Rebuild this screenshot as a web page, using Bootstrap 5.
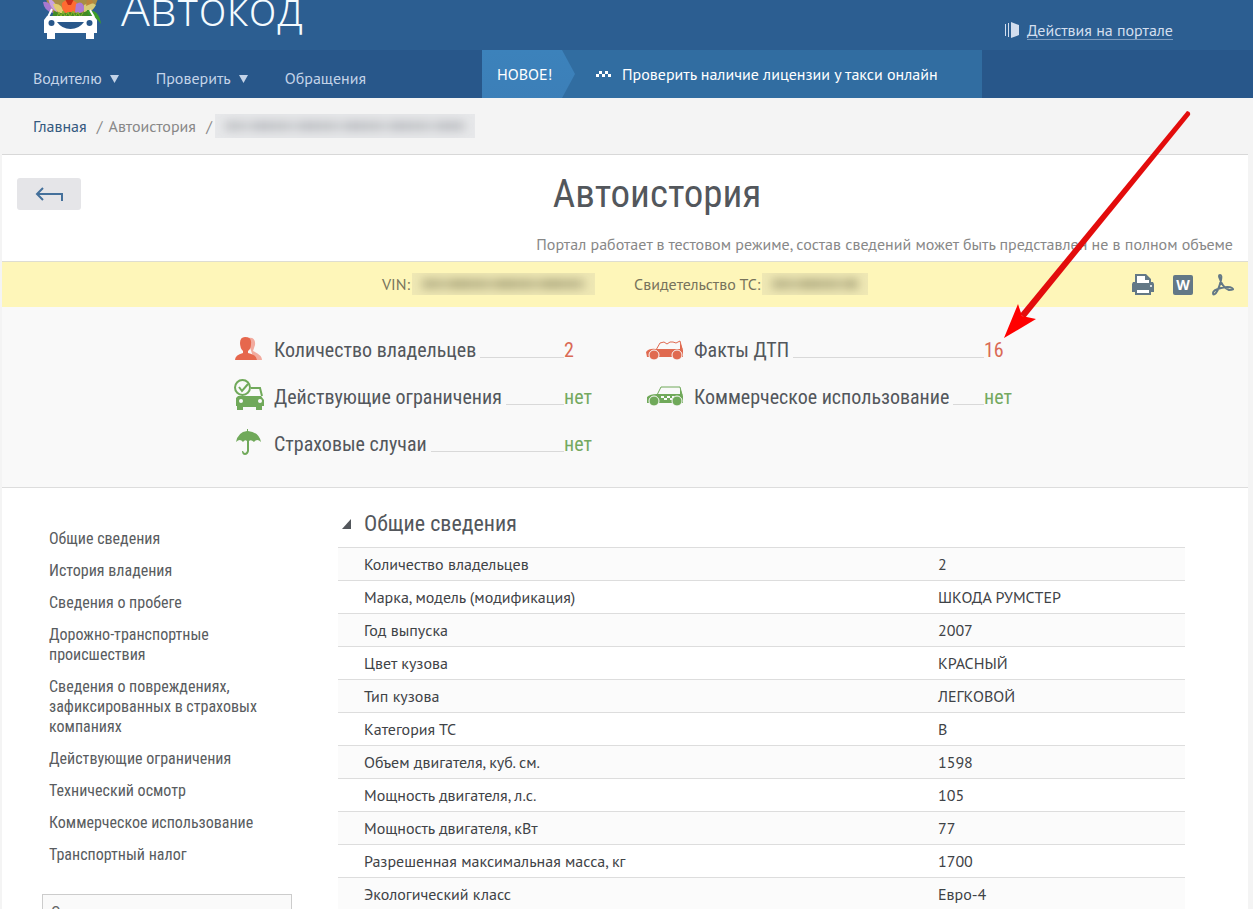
<!DOCTYPE html>
<html lang="ru">
<head>
<meta charset="utf-8">
<meta name="viewport" content="width=device-width, initial-scale=1">
<title>Автокод — Автоистория</title>
<link rel="stylesheet" href="https://cdn.jsdelivr.net/npm/bootstrap@5.3.0/dist/css/bootstrap.min.css">
<style>
  :root { --narrow: "Roboto Condensed", "Liberation Sans Narrow", "Liberation Sans", sans-serif; }
  body { background: #f4f4f4; color: #444; font: 16px/24px "PT Sans", "Noto Sans", sans-serif; overflow-x: hidden; }
  a { text-decoration: none; }
  svg { display: block; flex: none; }

  .top-bar { background: #2c5e91; height: 50px; padding: 0 80px 0 42px; }
  .logo-text { font: 300 48px/56px "Open Sans", Roboto, sans-serif; color: #f4fbff; margin: 0 0 14px 19px; }
  .portal-link { color: #d3deee; margin-top: 10px; }
  .portal-link span { border-bottom: 1px solid #7d9cc0; line-height: 18px; }
  .menu-bar { background: #28578a; min-height: 48px; }
  .menu-list { flex: 0 0 482px; padding: 8px 0 0 33px; gap: 37px; }
  .menu-list a { color: #c3d3e8; }
  .promo { flex: 0 1 500px; background: #316da1; color: #fff; }
  .promo:hover { color: #fff; }
  .promo-tag { background: linear-gradient(#3c82bb, #3c7fb8); width: 93px; padding-left: 15px; margin-right: 21px; clip-path: polygon(0 0, 80px 0, 100% 50%, 80px 100%, 0 100%); }
  .promo-text { margin-left: 11px; }

  .crumbs { padding: 0 33px; height: 56px; color: #888; gap: 6px; }
  .crumbs a { color: #34597f; }
  .crumbs .redacted { margin-left: -3px; }
  .redacted { display: inline-block; overflow: hidden; height: 24px; background: #e7e8ea; }
  .redacted i { display: block; height: 10px; margin: 7px 10px; background: repeating-linear-gradient(90deg, #c3c5c8 0 17px, #cdcfd2 17px 29px, #bfc1c5 29px 46px); filter: blur(5px); }
  .redacted.on-yellow { background: #efe8b4; height: 22px; }
  .redacted.on-yellow i { margin: 6px 10px; background: repeating-linear-gradient(90deg, #b9b48a 0 17px, #c4be93 17px 29px, #b3ae84 29px 46px); }

  .sheet { background: #fff; border-top: 1px solid #d8d8d8; margin: 0 5px 0 2px; }
  .title-row { padding: 9px 15px 0; }
  .back-btn { width: 64px; height: 32px; background: #e5e5e8; border-radius: 3px; margin-top: 14px; }
  .page-title { font: 400 39px/60px var(--narrow); color: #53575c; margin: 0 0 3px; }
  .notice { color: #888; line-height: 34px; }
  .vin-bar { background: #fef6b9; border-top: 1px solid #deddd2; height: 46px; color: #77735c; padding: 0 14px 2px 380px; }
  .certificate { margin-left: 39px; }
  .vin-bar .redacted { margin-left: 2px; }
  .export-tools { gap: 19px; padding-top: 2px; }
  .facts { background: #f9f9f9; border-bottom: 1px solid #ddd; padding: 19px 0 20px; gap: 50px; }
  .fact { height: 47px; font: 20px/28px var(--narrow); color: #53575c; }
  .fact-icon { width: 40px; }
  .fact-icon.wide { width: 48px; }
  .fact-name { width: 290px; gap: 4px; }
  .fact-name::after { content: ""; flex: 1; border-bottom: 1px solid #d9d9d9; margin-bottom: 6px; }
  .fact-value { width: 32px; }
  .bad { color: #d96a55; }
  .good { color: #74a95f; }
  .pointer { position: absolute; left: 20px; bottom: 24px; z-index: 2; }

  .details { padding: 20px 63px 0 40px; gap: 46px; }
  .side { flex: 0 0 250px; font: 16px/20px var(--narrow); }
  .side-list { padding: 21px 28px 0 7px; gap: 12px; }
  .side-list a { color: #595c60; }
  .side-box { border: 1px solid #ccc; background: #fafafa; margin-top: 29px; padding: 8px; color: #666; }
  .section-title { font: 22px/32px var(--narrow); color: #53575c; margin: 0; height: 39px; gap: 13px; padding-left: 3px; }
  .spec { color: #3f4347; width: 100%; }
  .spec th, .spec td { border-top: 1px solid #ddd; padding: 4px 24px; font-weight: 400; height: 33px; }
  .spec th { width: 68%; padding-left: 26px; }
  .spec tr:nth-child(odd) { background: #fbfbfb; }
</style>
</head>
<body>
<header>
  <div class="top-bar d-flex justify-content-between align-items-end overflow-hidden">
    <a href="#" class="d-flex align-items-end" aria-label="Автокод">
      <svg width="60" height="50" viewBox="0 0 60 50">
        <path d="M12 14Q5 6 4-2L56-2Q54 7 46 15Z" fill="#a98d45"/>
        <path d="M1 2Q9 0 11 13Q2 11 1 2Z" fill="#a779d0"/><path d="M6-2Q15 1 15 12Q8 9 6-2Z" fill="#c9a2e0"/>
        <path d="M11 4Q20 2 22 14Q13 13 11 4Z" fill="#e2cc70"/><path d="M20 3Q27-4 35 3Q36 13 28 14Q19 13 20 3Z" fill="#ff6b32"/>
        <path d="M22-3H33L29 5H26Z" fill="#c92c17"/><path d="M34 4Q41-1 43 10Q38 15 33 12Z" fill="#ad7bd4"/>
        <path d="M42 5Q49 1 54 5Q50 13 42 12Z" fill="#d8cb78"/><path d="M45 0Q50-3 51 3L44 6Z" fill="#bd843b"/>
        <path d="M45 10Q57 9 59 24Q53 15 44 15Z" fill="#3b9d28"/>
        <path d="M10 17L12 11Q20 15 28 12Q38 15 45 11L48 17Z" fill="#438b26"/>
        <path d="M15 17l2-5 2 5 2-6 2 6 3-5 2 5 3-6 2 6 3-5 2 5 3-4" stroke="#8bb52d" stroke-width="1" fill="none"/>
        <path d="M6 17L10 9M52 17L48 10" stroke="#fff" stroke-width="2"/>
        <path d="M5 16H52L55 20V33H52V39H44V33H13V39H5V33H2V20Z" fill="#fff"/>
        <circle cx="9.500" cy="23" r="3" fill="#28578a"/><circle cx="47.500" cy="23" r="3" fill="#28578a"/>
        <path d="M15 22H42Q37 29 28.500 29T15 22Z" fill="#28578a"/>
      </svg>
      <span class="logo-text">Автокод</span>
    </a>
    <a href="#" class="portal-link d-flex align-items-center gap-2 align-self-center">
      <svg width="14" height="16" viewBox="0 0 14 16" fill="#d3deee"><path d="M0 2h1v12H0zM3 1h1v14H3zM6 0l8 3v10l-8 3z"/></svg>
      <span>Действия на портале</span>
    </a>
  </div>
  <div class="menu-bar d-flex">
    <nav class="menu-list d-flex align-items-center">
      <a href="#" class="d-flex align-items-center gap-2">Водителю <svg width="9" height="10"><path d="M0 2H9L4.500 10Z" fill="#c3d3e8"/></svg></a>
      <a href="#" class="d-flex align-items-center gap-2">Проверить <svg width="9" height="10"><path d="M0 2H9L4.500 10Z" fill="#c3d3e8"/></svg></a>
      <a href="#">Обращения</a>
    </nav>
    <a href="#" class="promo d-flex align-items-center">
      <span class="promo-tag d-flex align-items-center align-self-stretch">НОВОЕ!</span>
      <svg width="15" height="6" fill="#fff"><path d="M0 3h3v3H0zM3 0h3v3H3zM6 3h3v3H6zM9 0h3v3H9zM12 3h3v3h-3z"/></svg>
      <span class="promo-text text-nowrap">Проверить наличие лицензии у такси онлайн</span>
    </a>
  </div>
</header>

<nav class="crumbs d-flex align-items-center" aria-label="Навигация">
  <a href="#">Главная</a><span>&nbsp;/</span><span>Автоистория</span><span>&nbsp;/</span>
  <span class="redacted" style="width:260px"><i></i></span>
</nav>

<main class="sheet">
  <div class="title-row">
    <div class="d-flex align-items-start">
      <button type="button" class="back-btn btn p-0 border-0 d-flex align-items-center justify-content-center" aria-label="Назад">
        <svg width="28" height="14" fill="none" stroke="#44709b" stroke-width="2"><path d="M8 1L2 7l6 6M2 7H27V14"/></svg>
      </button>
      <h1 class="page-title flex-grow-1 text-center">Автоистория</h1>
    </div>
    <div class="notice text-end">Портал работает в тестовом режиме, состав сведений может быть представлен не в полном объеме</div>
  </div>

  <div class="vin-bar d-flex align-items-center">
    <span>VIN:</span><span class="redacted on-yellow" style="width:183px"><i></i></span>
    <span class="certificate">Свидетельство ТС:</span><span class="redacted on-yellow" style="width:106px"><i></i></span>
    <div class="export-tools d-flex align-items-center ms-auto">
      <button type="button" class="btn p-0 border-0" aria-label="Печать"><svg width="22" height="22"><path d="M3 0H14L19 5V8H21L22 10V18H19V21H3V18H0V10L1 8H3Z" fill="#637886"/><path d="M5 2H13V6H17V9H5ZM5 16H17V19H5Z" fill="#fff"/><circle cx="19" cy="12" r="1" fill="#fff"/></svg></button>
      <button type="button" class="btn p-0 border-0" aria-label="Word"><svg width="20" height="20"><rect width="20" height="20" rx="2" fill="#637886"/><text x="10" y="15" text-anchor="middle" font-family="Open Sans, sans-serif" font-weight="700" font-size="14" fill="#fff">W</text></svg></button>
      <button type="button" class="btn p-0 border-0" aria-label="PDF"><svg width="22" height="22" fill="none" stroke="#637886" stroke-width="2"><path d="M8 5Q6 1 8 1T9 6Q7 15 4 19Q1 22 1 19T9 14Q17 12 20 14T17 16Q10 13 8 5Z"/></svg></button>
    </div>
  </div>

  <section class="facts d-flex justify-content-center">
    <div>
      <div class="fact d-flex align-items-center">
        <div class="fact-icon"><svg width="28" height="26"><path d="M13 1Q22-1 21 8L19 14Q28 18 28 23H20Z" fill="#f2ab9f"/><path d="M11 0Q18 0 17 7Q17 12 14 14V16Q23 18 23 23H1Q1 18 9 16V14Q6 11 6 6Q6 0 11 0Z" fill="#e6674d"/></svg></div>
        <div class="fact-name d-flex">Количество владельцев</div><div class="fact-value bad">2</div>
      </div>
      <div class="fact d-flex align-items-center">
        <div class="fact-icon"><svg width="30" height="41" fill="#70a95a"><path d="M17 12H26L28 20" fill="none" stroke="#70a95a" stroke-width="2"/><path d="M4 20H27L30 24V30H28V34H22V31H9V34H3V30H2V22Z"/><circle cx="7" cy="25" r="2" fill="#f9f9f9"/><circle cx="26" cy="25" r="2" fill="#f9f9f9"/><circle cx="8.500" cy="11.500" r="7.500" fill="#f9f9f9" stroke="#70a95a" stroke-width="2"/><path d="M5 11l3 4 6-7" fill="none" stroke="#70a95a" stroke-width="2"/></svg></div>
        <div class="fact-name d-flex">Действующие ограничения</div><div class="fact-value good">нет</div>
      </div>
      <div class="fact d-flex align-items-center">
        <div class="fact-icon"><svg width="28" height="30" fill="#70a95a"><path d="M14 0V2Q25 3 27 13Q23 9 20 13Q17 10 15 12V22Q14 26 11 26T8 22H9Q11 26 13 22V12Q11 10 9 13Q6 9 2 13Q4 3 13 2V0Z"/></svg></div>
        <div class="fact-name d-flex">Страховые случаи</div><div class="fact-value good">нет</div>
      </div>
    </div>
    <div>
      <div class="fact d-flex align-items-center">
        <div class="fact-icon wide"><svg width="38" height="20"><path d="M0 12Q3 8 10 9H34L34 2L37 10V17H1Z" fill="#e06a50"/><path d="M10 10L14 3L18 2L21 4L24 2H27L30 3L34 1L36 9" fill="none" stroke="#e06a50" stroke-width="1"/><g fill="#e06a50" stroke="#f9f9f9"><circle cx="8" cy="15" r="5"/><circle cx="31" cy="15" r="5"/></g></svg></div>
        <div class="fact-name d-flex">Факты ДТП</div>
        <div class="fact-value bad position-relative">16
          <svg class="pointer" width="188" height="230"><path d="M183 1Q187 2 186 5L21 208L16 204Z" fill="#e30c0c"/><path d="M0 228L14 194L18 206L32 209Z" fill="#f00"/></svg>
        </div>
      </div>
      <div class="fact d-flex align-items-center">
        <div class="fact-icon wide"><svg width="38" height="21"><path d="M1 11Q4 8 11 8H34L34 2L37 10V17H1Z" fill="#70a95a"/><path d="M11 9L15 1H34L36 9" fill="none" stroke="#70a95a" stroke-width="1"/><path d="M15 10h3v2h-3zM18 12h3v2h-3zM21 10h3v2h-3zM24 12h2v-2h2v2h-2v2h-2z" fill="#f9f9f9"/><g fill="#70a95a" stroke="#f9f9f9"><circle cx="8" cy="15" r="5"/><circle cx="31" cy="15" r="5"/></g></svg></div>
        <div class="fact-name d-flex">Коммерческое использование</div><div class="fact-value good">нет</div>
      </div>
    </div>
  </section>

  <div class="details d-flex align-items-start">
    <aside class="side">
      <nav class="side-list d-flex flex-column">
        <a href="#">Общие сведения</a>
        <a href="#">История владения</a>
        <a href="#">Сведения о пробеге</a>
        <a href="#">Дорожно-транспортные происшествия</a>
        <a href="#">Сведения о повреждениях, зафиксированных в страховых компаниях</a>
        <a href="#">Действующие ограничения</a>
        <a href="#">Технический осмотр</a>
        <a href="#">Коммерческое использование</a>
        <a href="#">Транспортный налог</a>
      </nav>
      <div class="side-box">О</div>
    </aside>
    <section class="flex-grow-1">
      <h2 class="section-title d-flex align-items-start"><svg width="10" height="28"><path d="M1 21L10 11V21Z" fill="#53575c"/></svg>Общие сведения</h2>
      <table class="spec">
        <tbody>
          <tr><th scope="row">Количество владельцев</th><td>2</td></tr>
          <tr><th scope="row">Марка, модель (модификация)</th><td>ШКОДА РУМСТЕР</td></tr>
          <tr><th scope="row">Год выпуска</th><td>2007</td></tr>
          <tr><th scope="row">Цвет кузова</th><td>КРАСНЫЙ</td></tr>
          <tr><th scope="row">Тип кузова</th><td>ЛЕГКОВОЙ</td></tr>
          <tr><th scope="row">Категория ТС</th><td>B</td></tr>
          <tr><th scope="row">Объем двигателя, куб. см.</th><td>1598</td></tr>
          <tr><th scope="row">Мощность двигателя, л.с.</th><td>105</td></tr>
          <tr><th scope="row">Мощность двигателя, кВт</th><td>77</td></tr>
          <tr><th scope="row">Разрешенная максимальная масса, кг</th><td>1700</td></tr>
          <tr><th scope="row">Экологический класс</th><td>Евро-4</td></tr>
        </tbody>
      </table>
    </section>
  </div>
</main>
<script src="https://cdn.jsdelivr.net/npm/bootstrap@5.3.0/dist/js/bootstrap.bundle.min.js"></script>
</body>
</html>
